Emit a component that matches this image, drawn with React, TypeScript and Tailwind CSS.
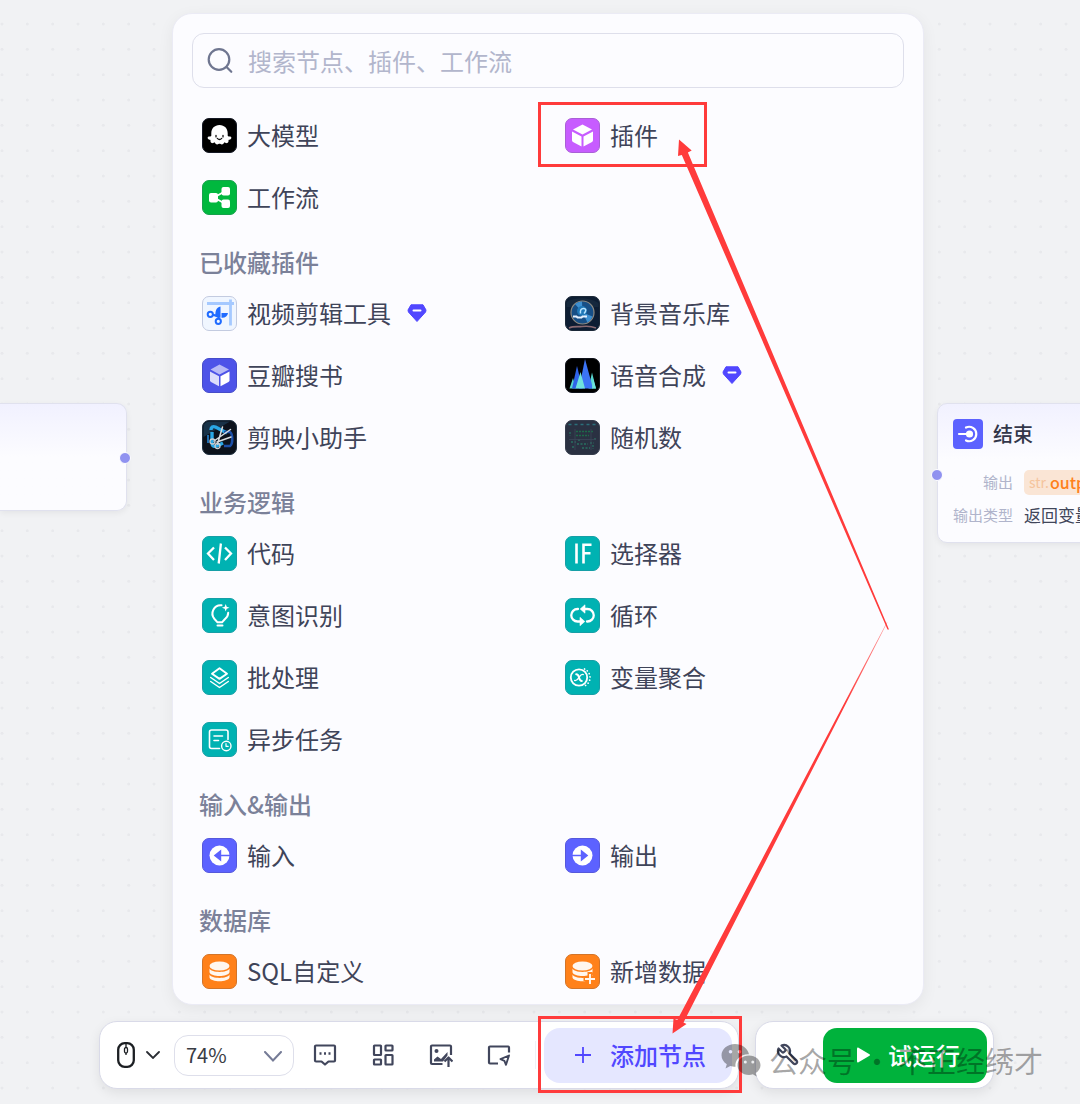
import type { ReactNode } from 'react';

type Item = { label: string; icon: ReactNode; premium?: boolean };
type Section = { title?: string; items: Item[] };

const S = { fill: 'none', stroke: '#fff', strokeLinecap: 'round' as const, strokeLinejoin: 'round' as const };

function Tile({ fill, edge, children }: { fill: string; edge: string; children: ReactNode }) {
  return (
    <svg viewBox="0 0 35 35" className="size-[35px] shrink-0" aria-hidden="true">
      <rect x="0.5" y="0.5" width="34" height="34" rx="6.5" fill={fill} stroke={edge} />
      {children}
    </svg>
  );
}

const Teal = ({ children }: { children: ReactNode }) => (
  <Tile fill="#00b2b2" edge="#169fa6">{children}</Tile>
);

const LlmIcon = () => (
  <Tile fill="#000" edge="#141824">
    <path
      d="M17.5 7c5 0 8.200 3.600 8.200 8.200v2.600c.6.9 1.500.7 2.600.8 1.400.2 1.400 2.100.3 2.700-.9.500-1.500.5-2.100.6.3 1.400-.2 2.900-1.500 3.200-1.200.3-1.900-.5-2.500-.8-.7 1-1.400 2.200-2.700 2.200-1 0-1.500-.7-2.300-.7s-1.300.7-2.300.7c-1.300 0-2-1.200-2.700-2.200-.6.3-1.300 1.100-2.500.8-1.300-.3-1.800-1.800-1.500-3.200-.6-.1-1.200-.1-2.100-.6-1.100-.6-1.100-2.500.3-2.700 1.100-.1 2 .1 2.600-.8v-2.600C9.300 10.600 12.500 7 17.500 7Z"
      fill="#fff"
    />
    <path d="M14 17.300v1.600M21 17.300v1.600M15.300 20.400c1.300 1.300 3.100 1.300 4.400 0" fill="none" stroke="#111" strokeWidth="1.300" strokeLinecap="round" />
  </Tile>
);

const FlowIcon = () => (
  <Tile fill="#00b83e" edge="#16a14b">
    <path d="M12 17.500 23.500 11M12 17.500l11.500 6.500" stroke="#fff" strokeWidth="1.800" />
    <rect x="7" y="13" width="9" height="9.500" rx="2" fill="#fff" />
    <rect x="19.500" y="7" width="8.500" height="8.500" rx="2" fill="#fff" />
    <rect x="19.500" y="19.500" width="8.500" height="8.500" rx="2" fill="#fff" />
  </Tile>
);

const PluginIcon = () => (
  <Tile fill="#c75cff" edge="#a95fd6">
    <path d="M17.500 6.500 27 11.500l-9.500 5L8 11.500Z" fill="#fff" />
    <path d="M7 13.500l9.500 5v10L8 24a2 2 0 0 1-1-1.700ZM28 13.500l-9.500 5v10L27 24a2 2 0 0 0 1-1.700Z" fill="#fff" />
  </Tile>
);

const BookIcon = () => (
  <Tile fill="#4d53e8" edge="#464cc9">
    <path d="M17.500 6.500 27 11.500l-9.500 5L8.500 11.500Z" fill="#b8baf6" />
    <path d="M8 13.500l9 4.800v10L9 24a2 2 0 0 1-1-1.700Z" fill="#dcddfb" />
    <path d="M27.500 13.500l-9 4.800v10l8-4.300a2 2 0 0 0 1-1.700Z" fill="#fff" />
  </Tile>
);

const VideoIcon = () => (
  <Tile fill="#f0f6ff" edge="#c3cbe0">
    <path d="M5 7.500h27M28.500 3.500v26" stroke="#a5c9ff" strokeWidth="2.800" />
    <path d="M18.500 10.500c-4.500 1-5.500 5-5 10.500l5 .8ZM19.500 17h6.500c-.5 3.500-3 5-6.500 4.700Z" fill="#1f6bff" />
    <path d="M10 18.800l8 1.200M16.500 20v2" stroke="#1f6bff" strokeWidth="2.200" />
    <circle cx="8.300" cy="18.300" r="2.600" fill="#f0f6ff" stroke="#1f6bff" strokeWidth="2" />
    <circle cx="16.300" cy="25.300" r="2.600" fill="#f0f6ff" stroke="#1f6bff" strokeWidth="2" />
  </Tile>
);

const MusicIcon = () => (
  <Tile fill="#0d1d33" edge="#1b2838">
    <path d="M1.500 6c9-5 22-5 32 1v4h-32Z" fill="#16283d" />
    <circle cx="17.500" cy="16.500" r="11.500" fill="#174f86" stroke="#8e8a82" strokeWidth="1.200" />
    <path d="M17.500 16.500 10 8a11 11 0 0 1 7-2.500ZM17.500 16.500l10 4a11 11 0 0 1-5 6Z" fill="#3d8fd0" />
    <circle cx="17" cy="15" r="5" fill="#1f78b8" />
    <path d="M15.500 17.500c-.5-3 .5-5.500 3.500-5s1.500 3.500 0 5" fill="none" stroke="#b9e4ff" strokeWidth="1.500" />
    <path d="M8 20.500h3.500l1 1h4l1-1H22" fill="none" stroke="#e6f2ff" strokeWidth="2" />
    <path d="M4 32c4-2 9-1 13-1.500s9-.5 14 1.500" fill="none" stroke="#8a6a72" strokeWidth="1.600" />
  </Tile>
);

const VoiceIcon = () => (
  <Tile fill="#000" edge="#10131c">
    <path d="M4.500 30.500 8 20l3 10.500ZM23.500 30.500l3.500-16 4 16Z" fill="#58d6cf" />
    <path d="M7 30.500 12 8l5.500 22.500Z" fill="#2f63e8" />
    <path d="M14 30.500 20 1l8 29.500Z" fill="#3b74f5" />
    <path d="M10.500 30.500 15.500 14l4.500 16.500ZM27 30.500l1-10 3 10Z" fill="#6fe3dc" />
  </Tile>
);

const CutIcon = () => (
  <Tile fill="#0c121c" edge="#1f3040">
    <path d="M1.500 7a5.500 5.500 0 0 1 5.500-5.500h21L1.500 17Z" fill="#183248" />
    <path d="M9 10c0-3 2-4 4.500-3L25 13M10 12v11c0 3 2 4 5 3l6-3" fill="none" stroke="#2aa8e6" strokeWidth="3.400" />
    <path d="M22 12h6c3 2 3 12 0 14h-6" fill="none" stroke="#1b4fa8" strokeWidth="2.600" />
    <path d="M6 15v8" stroke="#1f6db0" strokeWidth="2" />
    <path d="M12 21 28.500 9.500M15.500 24 20.500 7M15 22l14-5" stroke="#d8dde0" strokeWidth="1.500" strokeLinecap="round" />
    <circle cx="10.500" cy="21.500" r="2.500" fill="none" stroke="#c9ced2" strokeWidth="1.300" />
    <circle cx="15.500" cy="26" r="2.500" fill="none" stroke="#c9ced2" strokeWidth="1.300" />
  </Tile>
);

const RandomIcon = () => (
  <Tile fill="#2a3142" edge="#353c4c">
    <path d="M3.500 4.500h28" stroke="#2b6f7a" strokeWidth="1.400" strokeDasharray="3 3" />
    <path d="M11 11.500h18M11 15.500h13" stroke="#1c6a48" strokeWidth="1.600" strokeDasharray="2 1" />
    <path d="M5 12v4M6 22h5M13 20h3M12 24h11M25 23h4M7 27h3M17 28h8M28 25v4M30 18v3" stroke="#286f60" strokeWidth="1.300" strokeDasharray="2 1.500" />
    <path d="M10 9v21M26 9v21M4 19.500h27" stroke="#3b4658" strokeWidth="0.800" />
  </Tile>
);

const CodeIcon = () => (
  <Teal>
    <path d="M12 11.500 6 17.500l6 6.500M23 11.500l6 6-6 6.500M18.900 7.500l-2.200 20" {...S} strokeWidth="2.300" strokeLinecap="butt" strokeLinejoin="miter" />
  </Teal>
);

const IfIcon = () => (
  <Teal>
    <path d="M11.500 7.500v20M18.500 27.500V8.800h8M18.500 17.300h7" {...S} strokeWidth="2.600" strokeLinecap="butt" strokeLinejoin="miter" />
  </Teal>
);

const IntentIcon = () => (
  <Teal>
    <path d="M19.500 7.300A8.300 8.300 0 0 0 12.500 21l3 3.300h4.500l3-3.300a8.300 8.300 0 0 0 3.200-6.300" {...S} strokeWidth="2" />
    <path d="M15.500 27.500h5" {...S} strokeWidth="2" />
    <path d="m23.700 6 1 2.800 2.800 1-2.800 1-1 2.800-1-2.800-2.800-1 2.800-1Z" fill="#fff" />
  </Teal>
);

const LoopIcon = () => (
  <Teal>
    <path d="M13 11H12.500a6.200 6.200 0 0 0 0 12.500h3.500M22 23.500h.5a6.200 6.200 0 0 0 0-12.500H19" {...S} strokeWidth="2.300" />
    <path d="M15 19.300l4.800 4.200-4.800 4.200ZM20 6.800v8.400L15.200 11Z" fill="#fff" stroke="#fff" strokeLinejoin="round" strokeWidth="0.600" />
  </Teal>
);

const BatchIcon = () => (
  <Teal>
    <path d="M17.500 8.300 25 13.700l-7.500 5.200L10 13.700Z" {...S} strokeWidth="1.900" />
    <path d="m8.700 17.500 8.800 6 8.800-6M8.700 21.500l8.800 6 8.800-6" {...S} strokeWidth="1.500" />
  </Teal>
);

const VariableIcon = () => (
  <Teal>
    <circle cx="14" cy="17.500" r="8.200" {...S} strokeWidth="1.800" />
    <path d="M19.500 9a9.300 9.300 0 0 1 0 17" {...S} strokeWidth="1.700" strokeDasharray="0.100 3.200" />
    <path d="M11.200 14.200c2.200 0 2.300 1.200 2.800 3.300s.8 3.400 2.800 3.400" {...S} strokeWidth="2" />
    <path d="M18.300 14.600c-2.300-.9-3.300 1.400-4.300 2.900s-2.200 3.700-4.400 2.900" {...S} strokeWidth="1.300" />
  </Teal>
);

const AsyncIcon = () => (
  <Teal>
    <path d="M17.500 26.500h-8a2 2 0 0 1-2-2V10a2 2 0 0 1 2-2H24a2 2 0 0 1 2 2v7.500M12 14h8.500M12 18.500h4.500" {...S} strokeWidth="1.600" />
    <circle cx="24.300" cy="24" r="4.700" {...S} strokeWidth="1.400" />
    <path d="M24 21.700V24.300h2.200" {...S} strokeWidth="1.200" />
  </Teal>
);

const ArrowIcon = ({ back }: { back?: boolean }) => (
  <Tile fill="#5c62ff" edge="#5558dc">
    <g transform={back ? 'rotate(180 17.500 17.500)' : undefined}>
      <circle cx="17.500" cy="17.500" r="10" fill="#fff" />
      <path d="M6.500 16.700h9.300v-5.200l7.500 6-7.500 6v-5.200H6.500Z" fill="#5c62ff" />
    </g>
  </Tile>
);

const DataIcon = ({ plus }: { plus?: boolean }) => (
  <Tile fill="#ff811a" edge="#d37428">
    <ellipse cx="17.500" cy="12" rx="10" ry="4.600" fill="#fff7ef" />
    <path d="M7.500 14.500c1.500 4.500 18.500 4.500 20 0v3.800c-1.500 5-18.500 5-20 0ZM7.500 20.500c1.500 4.500 18.500 4.500 20 0V23.500c-1.500 5-18.500 5-20 0Z" fill="#fff7ef" />
    {plus && (
      <>
        <path d="M25 18v13M18.500 24.500h13" stroke="#ff811a" strokeWidth="5" />
        <path d="M25 20v10M20 25h10" stroke="#fff7ef" strokeWidth="1.900" />
      </>
    )}
  </Tile>
);

const Gem = () => (
  <svg viewBox="0 0 20 18" className="ml-[6px] h-[18px] w-[20px]" aria-hidden="true">
    <path d="M4 .8h12L19 6l-.4 2L10 17.500 1.400 8 1 6Z" fill="#5147ff" stroke="#5147ff" strokeLinejoin="round" />
    <path d="M6.500 6.500h7" stroke="#fff" strokeWidth="2" strokeLinecap="round" />
  </svg>
);

const sections: Section[] = [
  {
    items: [
      { label: '大模型', icon: <LlmIcon /> },
      { label: '插件', icon: <PluginIcon /> },
      { label: '工作流', icon: <FlowIcon /> },
    ],
  },
  {
    title: '已收藏插件',
    items: [
      { label: '视频剪辑工具', icon: <VideoIcon />, premium: true },
      { label: '背景音乐库', icon: <MusicIcon /> },
      { label: '豆瓣搜书', icon: <BookIcon /> },
      { label: '语音合成', icon: <VoiceIcon />, premium: true },
      { label: '剪映小助手', icon: <CutIcon /> },
      { label: '随机数', icon: <RandomIcon /> },
    ],
  },
  {
    title: '业务逻辑',
    items: [
      { label: '代码', icon: <CodeIcon /> },
      { label: '选择器', icon: <IfIcon /> },
      { label: '意图识别', icon: <IntentIcon /> },
      { label: '循环', icon: <LoopIcon /> },
      { label: '批处理', icon: <BatchIcon /> },
      { label: '变量聚合', icon: <VariableIcon /> },
      { label: '异步任务', icon: <AsyncIcon /> },
    ],
  },
  {
    title: '输入&输出',
    items: [
      { label: '输入', icon: <ArrowIcon back /> },
      { label: '输出', icon: <ArrowIcon /> },
    ],
  },
  {
    title: '数据库',
    items: [
      { label: 'SQL自定义', icon: <DataIcon /> },
      { label: '新增数据', icon: <DataIcon plus /> },
    ],
  },
];

function NodePanel() {
  return (
    <section className="mr-[70px] ml-[73px] rounded-[20px] border border-[#ebebf5] bg-[#fcfcff] px-[19px] pt-[19px] pb-[10px] shadow-[0_4px_16px_rgba(0,0,0,0.06)]">
      <label className="flex h-[55px] items-center gap-[15px] rounded-[12px] border border-[#dedfeb] px-[14px]">
        <svg viewBox="0 0 26 26" className="size-[26px] shrink-0" fill="none" stroke="#6f7690" strokeWidth="2.200" strokeLinecap="round" aria-hidden="true">
          <circle cx="12" cy="11.500" r="10.300" />
          <path d="m19.500 19 4.800 4.800" />
        </svg>
        <input
          type="text"
          aria-label="搜索节点"
          placeholder="搜索节点、插件、工作流"
          className="min-w-0 flex-1 bg-transparent text-2xl text-[#41464c] outline-none placeholder:text-[#b2b6cc]"
        />
      </label>
      <div className="mt-6 flex flex-col gap-7">
        {sections.map((s, i) => (
          <div key={i}>
            {s.title && <h2 className="mb-[14px] pl-[7px] text-2xl leading-[28px] font-medium text-[#7b8199]">{s.title}</h2>}
            <ul className="grid grid-cols-2 gap-x-[14px] gap-y-4">
              {s.items.map((it) => (
                <li key={it.label}>
                  <button type="button" className="flex h-[46px] w-full items-center gap-[10px] px-[10px] text-2xl whitespace-nowrap text-[#3f4459]">
                    {it.icon}
                    <span>{it.label}</span>
                    {it.premium && <Gem />}
                  </button>
                </li>
              ))}
            </ul>
          </div>
        ))}
      </div>
    </section>
  );
}

function ToolButton({ label, children }: { label: string; children: ReactNode }) {
  return (
    <button type="button" aria-label={label} className="flex w-[58px] justify-center">
      <svg viewBox="0 0 24 24" className="size-6" fill="none" stroke="#41465c" strokeWidth="2.200" strokeLinejoin="round" aria-hidden="true">
        {children}
      </svg>
    </button>
  );
}

function Toolbar() {
  return (
    <div className="mt-4 flex gap-4">
      <div className="flex h-[68px] flex-1 items-center rounded-[18px] border border-[#d9dae8] bg-white pr-[6px] pl-[17px] shadow-[0_4px_12px_rgba(0,0,0,0.08)]">
        <button type="button" aria-label="交互模式" className="flex items-center gap-[11px]">
          <svg viewBox="0 0 18 26" className="h-[26px] w-[18px]" fill="none" stroke="#1c1f23" aria-hidden="true">
            <rect x="1.200" y="1.200" width="15.600" height="23.600" rx="6.500" strokeWidth="2.300" />
            <path d="M9 1.500v4M9 11v2" strokeWidth="1.300" />
            <rect x="7.500" y="5.500" width="3" height="5.500" rx="1.500" strokeWidth="1.300" />
          </svg>
          <svg viewBox="0 0 14 8" className="h-2 w-[14px]" fill="none" stroke="#2a2d33" strokeWidth="1.800" strokeLinecap="round" aria-hidden="true">
            <path d="m1 1 6 6 6-6" />
          </svg>
        </button>
        <div className="relative ml-[14px] h-[41px] w-[120px]">
          <select aria-label="缩放" defaultValue="74" className="size-full appearance-none rounded-[14px] border border-[#dedfeb] bg-white pl-[11px] text-xl leading-none text-[#3a3d45]">
            <option value="74">74%</option>
            <option value="100">100%</option>
          </select>
          <svg viewBox="0 0 18 11" className="pointer-events-none absolute top-[16px] right-[12px] h-[11px] w-[18px]" fill="none" stroke="#757b96" strokeWidth="2" strokeLinecap="round" aria-hidden="true">
            <path d="m1 1 8 8.500L17 1" />
          </svg>
        </div>
        <div className="ml-[2px] flex flex-1">
          <ToolButton label="注释">
            <path d="M3 2.500h18a1 1 0 0 1 1 1v14a1 1 0 0 1-1 1h-5.500L12 21.500l-3.500-3H3a1 1 0 0 1-1-1v-14a1 1 0 0 1 1-1Z" />
            <path d="M6.500 10.500h2M11 10.500h2M15.500 10.500h2" strokeWidth="2.600" />
          </ToolButton>
          <ToolButton label="优化布局">
            <rect x="3" y="2.500" width="7" height="9.500" rx="0.500" />
            <rect x="14.500" y="2.500" width="7" height="5" rx="0.500" />
            <rect x="3" y="16.500" width="7" height="5" rx="0.500" />
            <rect x="14.500" y="12" width="7" height="9.500" rx="0.500" />
          </ToolButton>
          <ToolButton label="导出图片">
            <path d="M13.500 21H3a1 1 0 0 1-1-1V3.500a1 1 0 0 1 1-1h18a1 1 0 0 1 1 1V12" />
            <path d="M5 18.500v-2l3.500-3 3.500 2.500 6.500-7v3.500L14 18.500Z" fill="#41465c" stroke="none" />
            <circle cx="7.500" cy="8" r="2" fill="#41465c" stroke="none" />
            <path d="M19.500 24v-9M15.500 18.500l4-4 4 4" />
          </ToolButton>
          <ToolButton label="缩略图">
            <path d="M11 20.500H3a1 1 0 0 1-1-1v-15a1 1 0 0 1 1-1h18a1 1 0 0 1 1 1V9.500" />
            <path d="m22 12.500-8.500 3.700 3.900 1.600 1.600 4Z" strokeWidth="1.900" />
          </ToolButton>
        </div>
        <span className="mr-2 h-7 w-px bg-[#f0f0f6]" />
        <button type="button" className="flex h-[55px] w-[188px] items-center gap-[18px] rounded-[16px] bg-[#e5e7ff] pl-[30px] text-2xl font-medium whitespace-nowrap text-[#5147ff]">
          <svg viewBox="0 0 18 18" className="size-[18px]" stroke="#5147ff" strokeWidth="1.800" aria-hidden="true">
            <path d="M9 1v16M1 9h16" />
          </svg>
          添加节点
        </button>
      </div>
      <div className="flex h-[68px] w-[239px] items-center justify-between rounded-[18px] border border-[#d9dae8] bg-white pr-[6px] pl-[20px] shadow-[0_4px_12px_rgba(0,0,0,0.08)]">
        <button type="button" aria-label="调试">
          <svg viewBox="0 0 24 24" className="size-6" fill="none" stroke="#41465c" strokeWidth="2.200" strokeLinejoin="round" aria-hidden="true">
            <path
              transform="translate(24 0) scale(-1 1)"
              d="M14.700 6.300a1 1 0 0 0 0 1.400l1.600 1.600a1 1 0 0 0 1.400 0l3.770-3.770a6 6 0 0 1-7.940 7.940l-6.910 6.910a2.120 2.120 0 0 1-3-3l6.910-6.910a6 6 0 0 1 7.940-7.940l-3.760 3.760Z"
            />
          </svg>
        </button>
        <button type="button" className="flex h-[55px] w-[164px] items-center gap-[18px] rounded-[14px] bg-[#00b23c] pl-[34px] text-2xl font-medium text-white">
          <svg viewBox="0 0 13 16" className="h-4 w-[13px]" fill="#fff" aria-hidden="true">
            <path d="M0 1.500v13c0 1 .8 1.200 1.500.8l11-6.500c.6-.4.6-1.200 0-1.600l-11-6.500C.800.300 0 .5 0 1.500Z" />
          </svg>
          试运行
        </button>
      </div>
    </div>
  );
}

function EndNode() {
  return (
    <div className="absolute top-[403px] left-[937px] w-[220px] rounded-[10px] border border-[#e0e1ee] bg-linear-to-b from-[#f1f1ff] to-[#fcfcff] to-40% px-[15px] pt-[15px] pb-[13px] shadow-[0_2px_6px_rgba(0,0,0,0.06)]">
      <span className="absolute top-[65px] -left-[7px] size-3 rounded-full border border-white bg-[#9092f0]" />
      <div className="flex items-center gap-[10px]">
        <svg viewBox="0 0 30 30" className="size-[30px]" aria-hidden="true">
          <rect width="30" height="30" rx="4" fill="#5c62ff" />
          <path d="M6 15h10M13 8.500a7.200 7.200 0 1 1 0 13" fill="none" stroke="#fff" strokeWidth="2.200" strokeLinecap="round" />
          <circle cx="16.500" cy="15" r="3.600" fill="#fff" />
        </svg>
        <h3 className="text-xl leading-[30px] font-medium text-[#33364a]">结束</h3>
      </div>
      <dl className="mt-[19px] grid grid-cols-[60px_auto] items-center gap-x-[11px] gap-y-[5px] whitespace-nowrap">
        <dt className="text-right text-[15px] leading-7 text-[#b0b4cb]">输出</dt>
        <dd className="flex h-[25px] items-center gap-px rounded-[5px] bg-[#fae5d5] px-[5px] text-base">
          <span className="text-sm text-[#f5c49d]">str.</span>
          <span className="font-medium text-[#ff811a]">output</span>
        </dd>
        <dt className="text-right text-[15px] leading-7 text-[#b0b4cb]">输出类型</dt>
        <dd className="text-[17px] leading-7 text-[#41465a]">返回变量</dd>
      </dl>
    </div>
  );
}

function Annotations() {
  return (
    <>
      <div className="pointer-events-none absolute top-[102px] left-[439px] h-[65px] w-[169px] border-[3px] border-[#ff3b3b]" />
      <div className="pointer-events-none absolute top-[1016px] left-[439px] h-[77px] w-[204px] border-[3px] border-[#ff3b3b]" />
      <div className="pointer-events-none absolute top-[1039px] left-[622px] flex items-center gap-[8px] whitespace-nowrap text-black/35">
        <svg viewBox="0 0 40 34" className="h-[34px] w-[40px]" aria-hidden="true">
          <path
            fillRule="evenodd"
            fill="currentColor"
            d="M14 1C6.500 1 .500 6 .500 12.300c0 3.700 2 6.800 5.300 8.900L4.500 25.500l4.800-2.500c1.700.5 3.200.7 5.200.7-1-6.800 5-12.500 12.500-12.500h1C26.500 5 20.500 1 14 1ZM9.500 7a1.800 1.800 0 1 1 0 3.600 1.800 1.800 0 0 1 0-3.600Zm9 0a1.800 1.800 0 1 1 0 3.600 1.800 1.800 0 0 1 0-3.600Z"
          />
          <path
            fillRule="evenodd"
            fill="currentColor"
            d="M28 12.500c-6.500 0-11.500 4.300-11.500 9.700s5 9.700 11.500 9.700c1.300 0 2.600-.2 3.800-.6l3.900 2.200-1-3.600c3-1.800 4.800-4.500 4.800-7.700 0-5.400-5-9.700-11.500-9.700ZM24.300 17.500a1.500 1.500 0 1 1 0 3 1.500 1.500 0 0 1 0-3Zm7.500 0a1.500 1.500 0 1 1 0 3 1.500 1.500 0 0 1 0-3Z"
          />
        </svg>
        <span className="text-[29px] leading-[42px]">公众号 · 不正经绣才</span>
      </div>
      <svg viewBox="99 0 895 1104" className="pointer-events-none absolute top-0 left-0 w-full" aria-hidden="true">
        <defs>
          <linearGradient id="fade" gradientUnits="userSpaceOnUse" x1="887" y1="622" x2="845" y2="703">
            <stop offset="0" stopColor="#ff3b3b" stopOpacity="0.500" />
            <stop offset="1" stopColor="#ff3b3b" />
          </linearGradient>
        </defs>
        <path fill="#ff3b3b" d="M679 139.500 691.700 150.500 687.900 152.400 889 629.500 887.500 629.500 681.800 155 678 156Z" />
        <path fill="url(#fade)" d="M672.500 1033.500 673.500 1018.500 677.300 1020 887 622 887.300 622.500 683.500 1022.500 686.500 1024Z" />
      </svg>
    </>
  );
}

export default function App() {
  return (
    <div className="relative min-h-screen w-full overflow-hidden bg-[#f1f2f4] font-['Noto_Sans_CJK_SC','Noto_Sans',sans-serif]">
      <svg className="absolute inset-0 size-full" aria-hidden="true">
        <pattern id="dots" width="76" height="76" patternUnits="userSpaceOnUse">
          <g fill="#e8e9ec">
            {[24, 49.3, 74.7].map((y) => [2, 27.3, 52.7].map((x) => <circle key={`${x}-${y}`} cx={x} cy={y} r="1.500" />))}
          </g>
        </pattern>
        <rect width="100%" height="100%" fill="url(#dots)" />
      </svg>
      <div className="absolute top-[403px] left-0 h-[108px] w-[127px] rounded-r-[10px] border border-l-0 border-[#e0e1ee] bg-linear-to-b from-[#f1f1ff] to-[#fcfcff] to-50% shadow-[0_2px_6px_rgba(0,0,0,0.06)]">
        <span className="absolute top-[48px] -right-[5px] size-3 rounded-full border border-white bg-[#9092f0]" />
      </div>
      <EndNode />
      <div className="flex justify-center pl-[13px]">
        <main className="relative w-full max-w-[895px] pt-[13px] pb-4">
          <NodePanel />
          <Toolbar />
          <Annotations />
        </main>
      </div>
    </div>
  );
}
